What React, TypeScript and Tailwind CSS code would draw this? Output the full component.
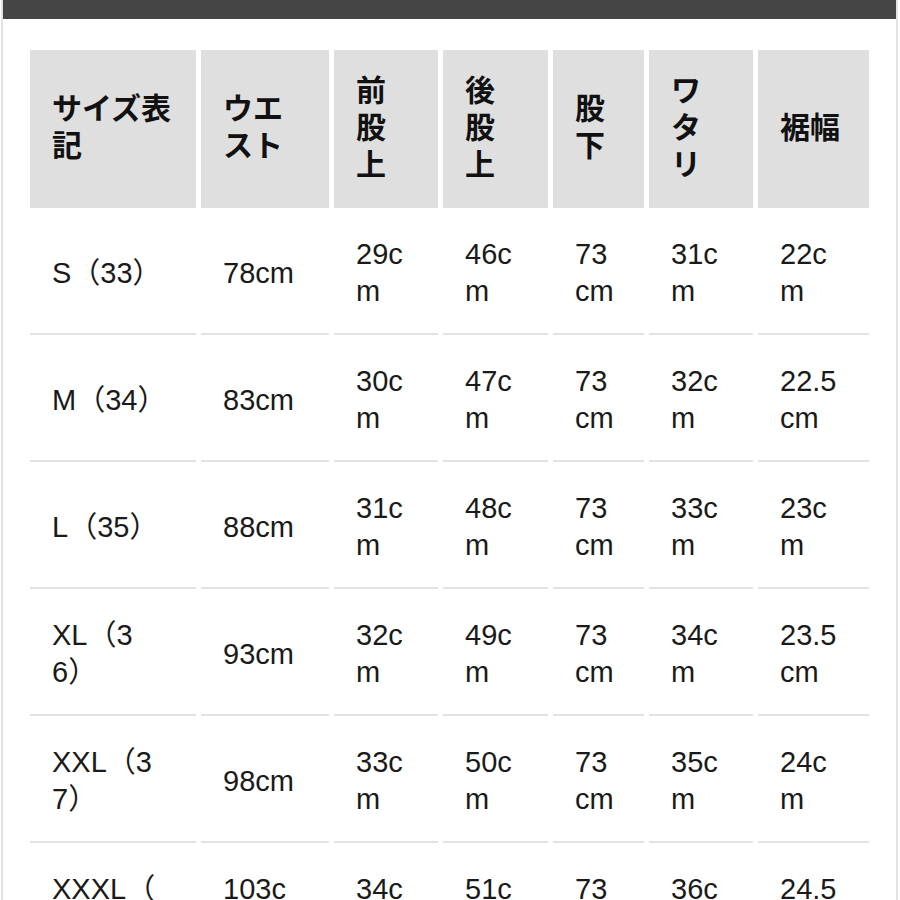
import React from "react";

const headers: string[][] = [
  ["サイズ表", "記"],
  ["ウエ", "スト"],
  ["前", "股", "上"],
  ["後", "股", "上"],
  ["股", "下"],
  ["ワ", "タ", "リ"],
  ["裾幅"],
];

const rows: string[][][] = [
  [["S（33）"], ["78cm"], ["29c", "m"], ["46c", "m"], ["73", "cm"], ["31c", "m"], ["22c", "m"]],
  [["M（34）"], ["83cm"], ["30c", "m"], ["47c", "m"], ["73", "cm"], ["32c", "m"], ["22.5", "cm"]],
  [["L（35）"], ["88cm"], ["31c", "m"], ["48c", "m"], ["73", "cm"], ["33c", "m"], ["23c", "m"]],
  [["XL（3", "6）"], ["93cm"], ["32c", "m"], ["49c", "m"], ["73", "cm"], ["34c", "m"], ["23.5", "cm"]],
  [["XXL（3", "7）"], ["98cm"], ["33c", "m"], ["50c", "m"], ["73", "cm"], ["35c", "m"], ["24c", "m"]],
  [["XXXL（", "8）"], ["103c", "m"], ["34c", "m"], ["51c", "m"], ["73", "cm"], ["36c", "m"], ["24.5", "cm"]],
];

export default function App() {
  return (
    <div className="w-[900px] h-[900px] overflow-hidden bg-white">
      <div className="ml-[1px] w-[897px] h-[900px] border-l-2 border-r-2 border-[#e3e3e3] bg-white">
        <div className="h-[19px] bg-[#454545]" />
        <div className="ml-[27px] mt-[31px] grid grid-cols-[166px_128px_104px_105px_91px_104px_111px] gap-x-[5px]">
          {headers.map((h, i) => (
            <div
              key={"h" + i}
              className="h-[158px] bg-[#dfdfdf] flex flex-col justify-center pl-[22px] pb-[8px] text-[30px] leading-[37px] font-bold text-[#111] whitespace-nowrap"
              style={{ fontFamily: '"Noto Sans CJK JP", "Noto Sans", sans-serif' }}
            >
              {h.map((l, j) => (
                <div key={j}>{l}</div>
              ))}
            </div>
          ))}
          {rows.map((r, ri) =>
            r.map((c, ci) => (
              <div
                key={ri + "-" + ci}
                className="h-[127px] border-b-2 border-[#e2e2e2] flex flex-col justify-center pl-[22px] pt-[5px] text-[29px] leading-[37px] text-[#1a1a1a] whitespace-nowrap"
                style={{ fontFamily: '"Liberation Sans", Arial, "Noto Sans CJK JP", sans-serif' }}
              >
                {c.map((l, j) => (
                  <div key={j}>{l}</div>
                ))}
              </div>
            ))
          )}
        </div>
      </div>
    </div>
  );
}
